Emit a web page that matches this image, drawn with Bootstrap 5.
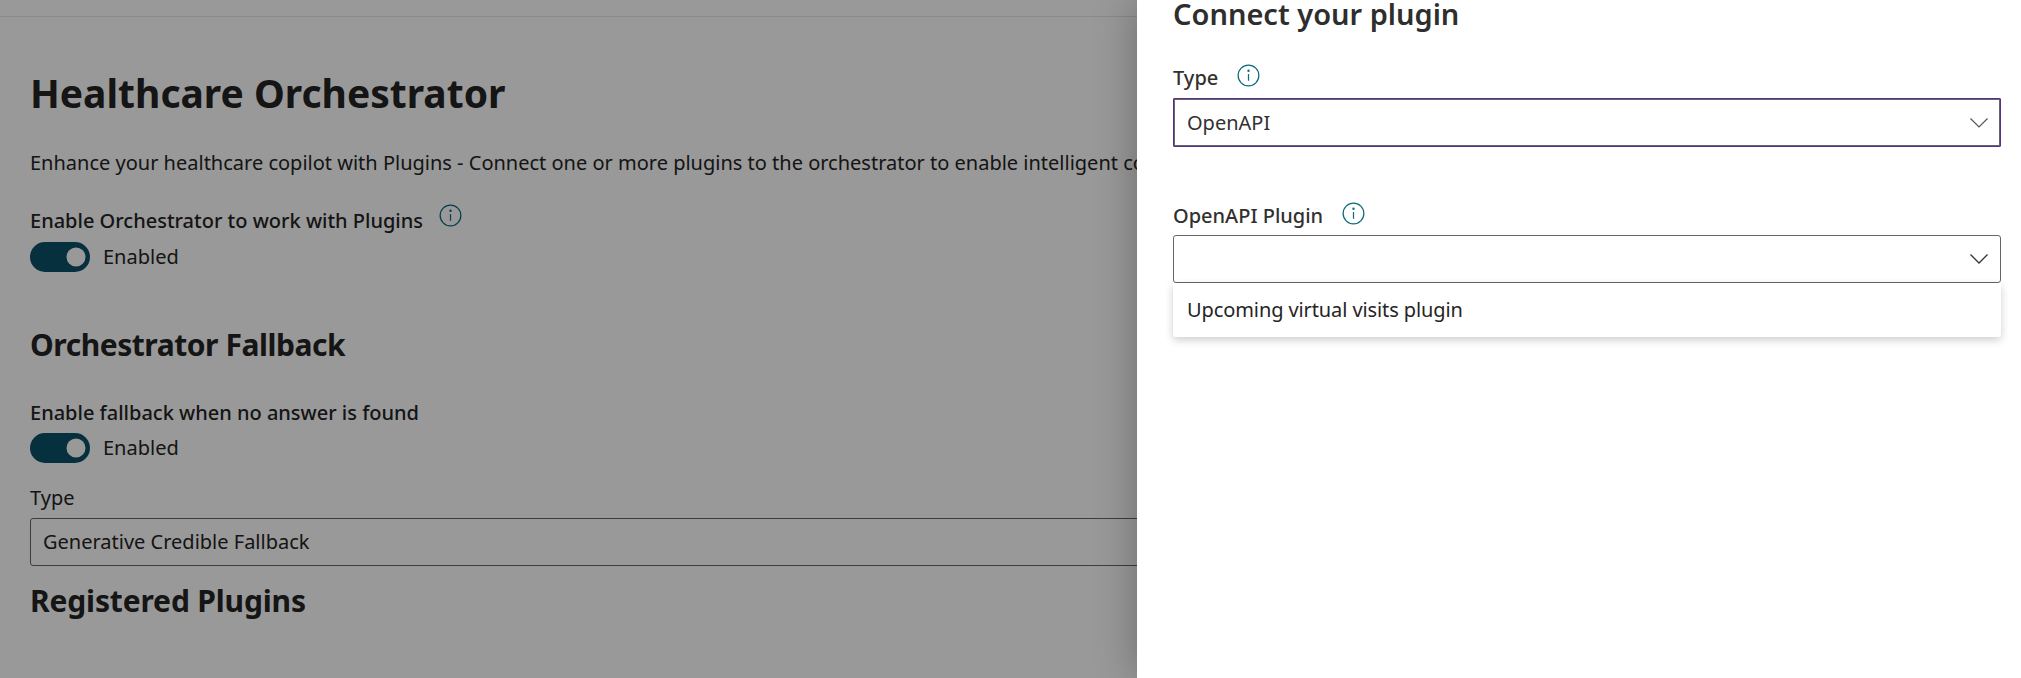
<!DOCTYPE html>
<html lang="en"><head><meta charset="utf-8"><title>Healthcare Orchestrator</title>
<link href="https://cdn.jsdelivr.net/npm/bootstrap@5.3.0/dist/css/bootstrap.min.css" rel="stylesheet">
<style>
html,body{height:678px;overflow:hidden;background:#fff}
body{font-family:"Noto Sans","Open Sans",sans-serif;font-size:20px;color:#242424;line-height:28px;position:relative}
.top-rule{height:17px;border-bottom:1px solid #e4e4e4}
.page-main{padding:51px 0 0 30px;white-space:nowrap}
.page-title{font-size:39px;font-weight:700;line-height:50px;margin:0 0 31px}
.page-desc{margin:0 0 30px;font-weight:400;line-height:28px}
.sec-title{font-size:30px;font-weight:700;line-height:40px;margin:0;letter-spacing:-.3px}
.sec-first{margin-top:53px;letter-spacing:-.45px}
.sec-last{margin-top:15px;letter-spacing:-.15px}
.fld-label{font-weight:500;line-height:28px}
.plain-label{line-height:28px;margin-top:21px}
.fallback-label{margin-top:34px}
.info-ic{width:23px;height:23px;flex:none;color:#0f6a7e}
.lift-ic{margin-top:-3px}
.sw-row{display:flex;align-items:center;gap:13px;height:30px}
.sw-a{margin-top:7px}
.sw-b{margin-top:6px}
.form-check-input.sw{width:60px;height:30px;margin:0;float:none;border:0;border-radius:15px;background-color:#0b5068;
 background-image:url("data:image/svg+xml,%3Csvg xmlns='http://www.w3.org/2000/svg' viewBox='0 0 60 30'%3E%3Ccircle cx='46' cy='15' r='9.500' fill='%23fff'/%3E%3C/svg%3E");background-position:center;background-size:60px 30px}
.left-select{width:1500px;height:48px;border:1px solid #666;border-radius:3px;padding:0 12px;display:flex;align-items:center;margin-top:6px;background:#fff}
.dim-layer{position:absolute;inset:0;background:rgba(0,0,0,.4)}
.side-panel{position:absolute;top:0;bottom:0;left:1137px;right:0;background:#fff;padding:0 20px 0 36px;box-shadow:0 0 40px rgba(0,0,0,.3);color:#323130}
.panel-title{font-size:29px;font-weight:600;line-height:28px;margin:0;color:#2e2e2e}
.panel-label-a{margin-top:36px;height:34px;gap:19px}
.panel-label-b{margin-top:55px;height:33px;gap:19px}
.drop-box{height:48px;border:1px solid #666;border-radius:3px;padding:0 13px;display:flex;align-items:center;justify-content:space-between;background:#fff}
.drop-box.is-open{height:49px;border:1px solid #5c2d91;border-radius:1px;box-shadow:inset 0 0 0 1px #666}
.chev{width:20px;height:12px;flex:none;margin-right:-2px}
.drop-menu{height:54px;border-radius:0 0 3px 3px;box-shadow:0 3px 9px rgba(0,0,0,.2);padding:0 14px;display:flex;align-items:center;background:#fff;color:#242424;letter-spacing:-.1px}
</style></head>
<body>
<div class="top-rule"></div>
<main class="page-main">
  <h1 class="page-title">Healthcare Orchestrator</h1>
  <p class="page-desc">Enhance your healthcare copilot with Plugins - Connect one or more plugins to the orchestrator to enable intelligent conversations</p>
  <div class="d-flex gap-3 fld-label"><span>Enable Orchestrator to work with Plugins</span>
    <svg class="info-ic lift-ic" viewBox="0 0 24 24" fill="none" stroke="currentColor" stroke-width="1.3"><circle cx="12" cy="12" r="10.8"/><path d="M12 10.500v7"/><circle cx="12" cy="7" r=".6" fill="currentColor"/></svg></div>
  <div class="sw-row sw-a"><input class="form-check-input sw" type="checkbox" role="switch" checked aria-label="Enable Orchestrator"><span>Enabled</span></div>
  <h2 class="sec-title sec-first">Orchestrator Fallback</h2>
  <div class="fld-label fallback-label">Enable fallback when no answer is found</div>
  <div class="sw-row sw-b"><input class="form-check-input sw" type="checkbox" role="switch" checked aria-label="Enable fallback"><span>Enabled</span></div>
  <div class="plain-label">Type</div>
  <div class="left-select">Generative Credible Fallback</div>
  <h2 class="sec-title sec-last">Registered Plugins</h2>
</main>
<div class="dim-layer"></div>
<aside class="side-panel">
  <h2 class="panel-title">Connect your plugin</h2>
  <div class="d-flex fld-label panel-label-a"><span>Type</span>
    <svg class="info-ic" viewBox="0 0 24 24" fill="none" stroke="currentColor" stroke-width="1.3"><circle cx="12" cy="12" r="10.8"/><path d="M12 10.500v7"/><circle cx="12" cy="7" r=".6" fill="currentColor"/></svg></div>
  <div class="drop-box is-open"><span>OpenAPI</span><svg class="chev" viewBox="0 0 20 12" fill="none" stroke="#555" stroke-width="1.2"><path d="M1.500 1.500 10 10l8.500-8.500"/></svg></div>
  <div class="d-flex fld-label panel-label-b"><span>OpenAPI Plugin</span>
    <svg class="info-ic" viewBox="0 0 24 24" fill="none" stroke="currentColor" stroke-width="1.3"><circle cx="12" cy="12" r="10.8"/><path d="M12 10.500v7"/><circle cx="12" cy="7" r=".6" fill="currentColor"/></svg></div>
  <div class="drop-box"><span></span><svg class="chev" viewBox="0 0 20 12" fill="none" stroke="#333" stroke-width="1.3"><path d="M1.500 1.500 10 10l8.500-8.500"/></svg></div>
  <div class="drop-menu">Upcoming virtual visits plugin</div>
</aside>
<script src="https://cdn.jsdelivr.net/npm/bootstrap@5.3.0/dist/js/bootstrap.bundle.min.js"></script>
</body></html>
